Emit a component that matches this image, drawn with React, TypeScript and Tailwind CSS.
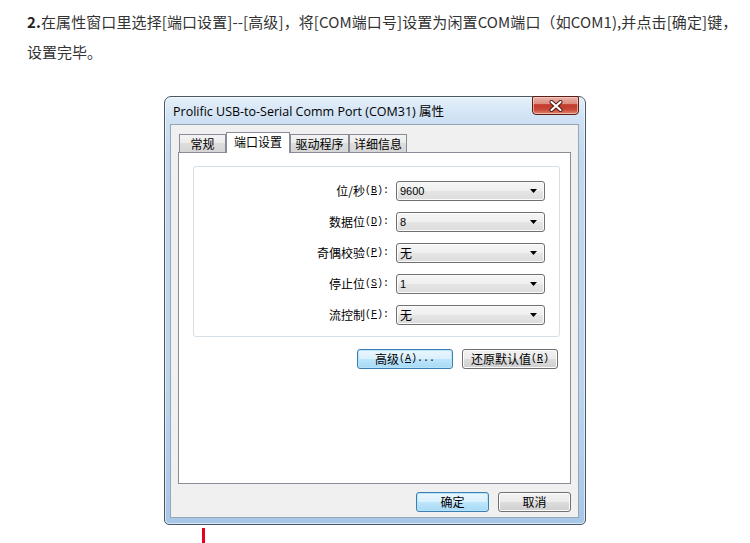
import React from "react";

const cjk = "font-['Noto_Sans_CJK_SC',sans-serif]";
const mono = "font-['Liberation_Mono','Noto_Sans_CJK_SC',monospace]";

function Key({ k }: { k: string }) {
  return (
    <span className={`${mono} text-[10px]`}>
      (<span className="underline underline-offset-[1px]">{k}</span>)
    </span>
  );
}

function Arrow() {
  return (
    <svg width="7" height="4" viewBox="0 0 7 4" className="shrink-0">
      <path d="M0 0 H7 L3.5 4 Z" fill="#000" />
    </svg>
  );
}

function Combo({ value, latin }: { value: string; latin?: boolean }) {
  return (
    <div className="w-[149px] h-[20px] border border-[#707070] rounded-[3px] bg-[linear-gradient(to_bottom,#f6f6f6_0%,#efefef_50%,#e5e5e5_50%,#dcdcdc_100%)] shadow-[inset_0_0_0_1px_#fbfbfb] flex items-center justify-between pl-[3px] pr-[7px]">
      <span
        className={
          latin
            ? "font-['Liberation_Sans',sans-serif] text-[11px] text-black leading-none"
            : `${cjk} text-[12px] text-black leading-none`
        }
      >
        {value}
      </span>
      <Arrow />
    </div>
  );
}

function Row({ label, k, value, latin }: { label: string; k: string; value: string; latin?: boolean }) {
  return (
    <div className="flex items-center justify-end gap-[7px] pr-[14px]">
      <span className={`${cjk} text-[12px] text-black leading-none flex items-center`}>
        {label}
        <Key k={k} />
        <span className={`${mono} text-[10px]`}>:</span>
      </span>
      <Combo value={value} latin={latin} />
    </div>
  );
}

function GrayButton({ children, w }: { children: React.ReactNode; w: string }) {
  return (
    <div
      className={`${w} h-[20px] border border-[#707070] rounded-[3px] bg-[linear-gradient(to_bottom,#f2f2f2_0%,#ebebeb_50%,#dddddd_50%,#cfcfcf_100%)] shadow-[inset_0_0_0_1px_#fcfcfc] flex items-center justify-center ${cjk} text-[12px] text-black leading-none`}
    >
      {children}
    </div>
  );
}

function BlueButton({ children, w }: { children: React.ReactNode; w: string }) {
  return (
    <div
      className={`${w} h-[20px] border border-[#3c7fb1] rounded-[3px] bg-[linear-gradient(to_bottom,#eaf6fd_0%,#d9f0fc_50%,#bee6fd_50%,#a7d9f5_100%)] shadow-[inset_0_0_0_1px_#b8e4fb] flex items-center justify-center ${cjk} text-[12px] text-black leading-none`}
    >
      {children}
    </div>
  );
}

function Tab({ label, active, w }: { label: string; active?: boolean; w: string }) {
  if (active) {
    return (
      <div
        className={`${w} h-[21px] border border-[#898c95] border-b-0 bg-white relative z-10 -mb-px flex items-center justify-center ${cjk} text-[12px] text-black leading-none pb-[2px]`}
      >
        {label}
      </div>
    );
  }
  return (
    <div
      className={`${w} h-[18px] border border-[#898c95] border-b-0 bg-[linear-gradient(to_bottom,#f3f3f3_0%,#ebebeb_50%,#dddddd_50%,#d5d5d5_100%)] flex items-center justify-center ${cjk} text-[12px] text-black leading-none`}
    >
      {label}
    </div>
  );
}

function CloseButton() {
  return (
    <div className="w-[47px] h-[19px] -mt-px rounded-b-[4px] rounded-t-[2px] border border-[#5b1f1a] bg-[linear-gradient(to_bottom,#eab3a8_0%,#dd8c7e_40%,#c23a2b_45%,#c8493a_75%,#e08a72_100%)] shadow-[inset_0_0_0_1px_rgba(255,220,210,0.6)] flex items-center justify-center">
      <svg width="14" height="12" viewBox="0 0 14 12">
        <path d="M2.5 2 L11.5 10 M11.5 2 L2.5 10" stroke="#4a1512" strokeWidth="4" strokeLinecap="round" />
        <path d="M2.5 2 L11.5 10 M11.5 2 L2.5 10" stroke="#fff" strokeWidth="2.2" strokeLinecap="round" />
      </svg>
    </div>
  );
}

function Window() {
  return (
    <div className="ml-[164px] mt-[29px] w-[422px] h-[429px] border border-[#4b5866] rounded-t-[7px] rounded-b-[5px] bg-[linear-gradient(to_bottom,#e6f0fa_0px,#d0e2f4_20px,#c2d9f0_60px,#bcd5ee_70%,#a7c7e8_100%)] shadow-[inset_0_0_0_1px_rgba(255,255,255,0.55)] flex flex-col pl-[5px] pr-[6px] pb-[6px]">
      <div className="h-[27px] flex items-start justify-between">
        <div className="pl-[3px] pt-[6px] font-['Open_Sans','Noto_Sans_CJK_SC',sans-serif] text-[12.5px] leading-[16px] text-black">
          Prolific USB-to-Serial Comm Port (COM31) <span className={cjk}>属性</span>
        </div>
        <CloseButton />
      </div>
      <div className="flex-1 border border-[#97a6b6] bg-[#f0f0f0] flex flex-col px-[7px] pt-[7px] pb-[5px]">
        <div className="flex items-end pl-[1px]">
          <Tab label="常规" w="w-[47px]" />
          <Tab label="端口设置" active w="w-[64px]" />
          <Tab label="驱动程序" w="w-[59px]" />
          <Tab label="详细信息" w="w-[58px]" />
        </div>
        <div className="h-[332px] border border-[#898c95] bg-white flex flex-col">
          <div className="ml-[14px] mr-[10px] mt-[13px] border border-[#d5dfe5] rounded-[3px] pt-[14px] pb-[11px] flex flex-col gap-[11px]">
            <Row label="位/秒" k="B" value="9600" latin />
            <Row label="数据位" k="D" value="8" latin />
            <Row label="奇偶校验" k="P" value="无" />
            <Row label="停止位" k="S" value="1" latin />
            <Row label="流控制" k="F" value="无" />
          </div>
          <div className="flex justify-end gap-[9px] mt-[12px] pr-[12px]">
            <BlueButton w="w-[96px]">
              高级<Key k="A" />
              <span className={`${mono} text-[10px]`}>...</span>
            </BlueButton>
            <GrayButton w="w-[96px]">
              还原默认值<Key k="R" />
            </GrayButton>
          </div>
        </div>
        <div className="flex justify-end gap-[9px] mt-[8px]">
          <BlueButton w="w-[73px]">确定</BlueButton>
          <GrayButton w="w-[73px]">取消</GrayButton>
        </div>
      </div>
    </div>
  );
}

export default function App() {
  return (
    <div className="w-[750px] h-[543px] bg-white overflow-hidden">
      <div className={`pl-[27px] pt-[7px] ${cjk} text-[15px] leading-[30px] text-[#333]`}>
        <p className="whitespace-nowrap tracking-[0.1px]">
          <b className="text-[#222]">2.</b>在属性窗口里选择[端口设置]--[高级]，将[COM端口号]设置为闲置COM端口（如COM1),并点击[确定]键，
        </p>
        <p>设置完毕。</p>
      </div>
      <Window />
      <div className="ml-[202px] mt-[3px] w-[3px] h-[16px] bg-[#e8001c]" />
    </div>
  );
}
